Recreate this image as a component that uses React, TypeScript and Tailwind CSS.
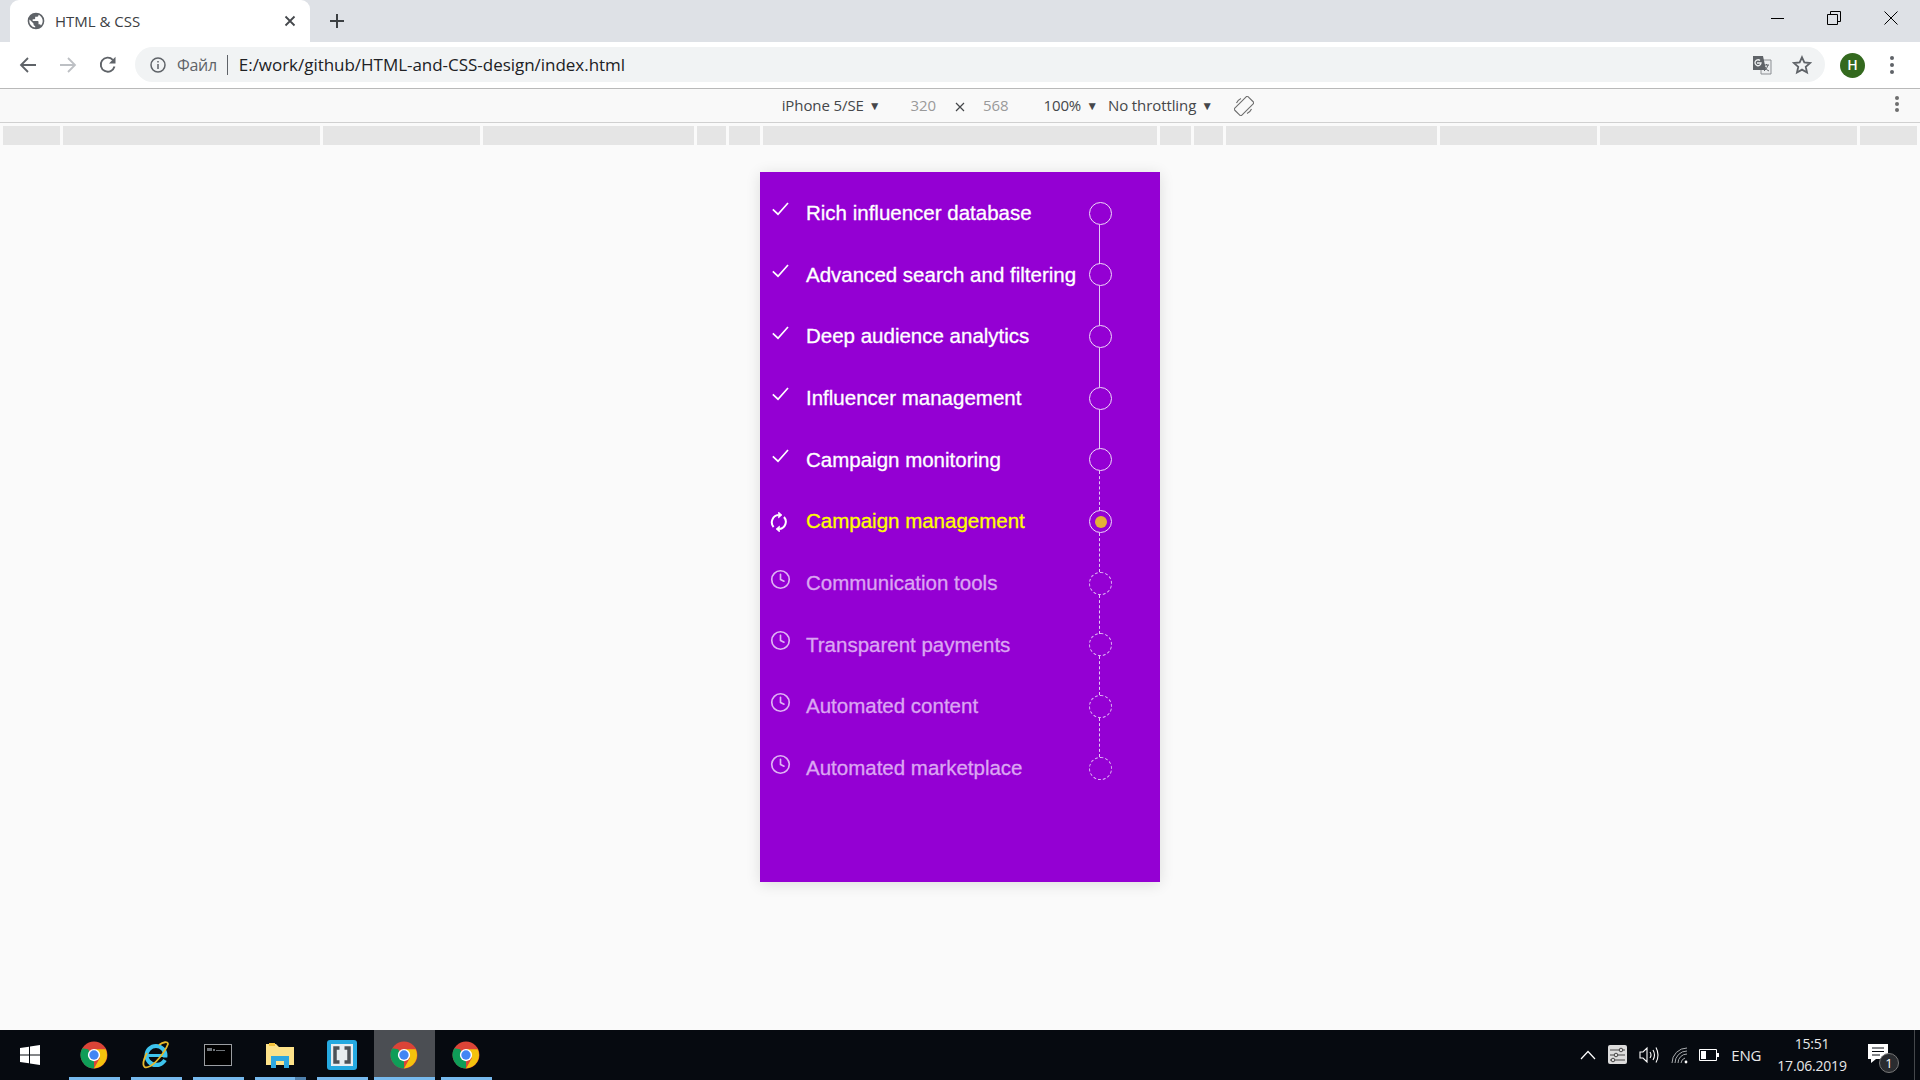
import type { FC } from "react";
import { LuClock } from "react-icons/lu";

const ui = "font-['Open_Sans','Noto_Sans',sans-serif]";

const rulerWidths = [57, 257, 157, 211, 29, 31, 394, 31, 29, 211, 157, 257, 57];

type Status = "done" | "active" | "pending";

const steps: { label: string; status: Status }[] = [
  { label: "Rich influencer database", status: "done" },
  { label: "Advanced search and filtering", status: "done" },
  { label: "Deep audience analytics", status: "done" },
  { label: "Influencer management", status: "done" },
  { label: "Campaign monitoring", status: "done" },
  { label: "Campaign management", status: "active" },
  { label: "Communication tools", status: "pending" },
  { label: "Transparent payments", status: "pending" },
  { label: "Automated content", status: "pending" },
  { label: "Automated marketplace", status: "pending" },
];

const ChromeIcon: FC = () => (
  <svg className="mr-[2px]" width="28" height="28" viewBox="0 0 48 48">
    <circle cx="24" cy="24" r="23" fill="#db4437" />
    <path d="M24 47 A23 23 0 0 1 4 12.5 L14 14 L24 34 Z" fill="#0f9d58" />
    <path d="M24 14 H44 A23 23 0 0 1 24 47 L34 29 Z" fill="#f4c20d" />
    <circle cx="24" cy="24" r="10.5" fill="#fff" />
    <circle cx="24" cy="24" r="8" fill="#4285f4" />
  </svg>
);

const TaskItem: FC<{ active?: boolean; double?: boolean; children: React.ReactNode }> = ({ active, double, children }) => (
  <div className={`relative flex h-full items-center justify-center ${active ? "w-[61px] bg-[#4b4e53]" : "w-[51px]"}`}>
    {children}
    <div className="absolute right-0 bottom-0 left-0 h-[3px] bg-[#76b9ed]" />
    {double && <div className="absolute right-0 bottom-0 h-[3px] w-[11px] bg-[#4f81ad]" />}
  </div>
);

const Step: FC<{ label: string; status: Status; last: boolean }> = ({ label, status, last }) => {
  const solidLine = status === "done" && label !== "Campaign monitoring";
  return (
    <li className="flex h-[61.65px] items-center">
      <div className="flex h-full w-[46px] shrink-0 items-center justify-start pl-[11px]">
        {status === "done" && (
          <svg className="mb-[8px] ml-[1px]" width="17" height="14" viewBox="0 0 17 14" fill="none" stroke="#fff" strokeWidth="1.7">
            <path d="M0.8 7.4 L6 12.2 L16 1" />
          </svg>
        )}
        {status === "active" && (
          <svg width="18" height="20" viewBox="0 0 18 20" fill="none" stroke="#fff" strokeWidth="2" className="ml-[-1px]">
            <path d="M3.6 15 A7.2 7.2 0 0 1 8.5 3.1" />
            <path d="M14 5 A7.2 7.2 0 0 1 9.5 16.9" />
            <path d="M8.5 0 L12 3 L8.5 6 Z" fill="#fff" strokeWidth="0.6" />
            <path d="M9.5 14 L6 17 L9.5 20 Z" fill="#fff" strokeWidth="0.6" />
          </svg>
        )}
        {status === "pending" && <LuClock className="mb-[8px] ml-[-1px] text-[21px] text-[#dfb3f4]" strokeWidth={1.9} />}
      </div>
      <span
        className={`flex-1 text-[20.5px] leading-none font-['Liberation_Sans',Arial,sans-serif] whitespace-nowrap [-webkit-text-stroke:0.3px_currentColor] ${
          status === "done" ? "text-white" : status === "active" ? "text-[#ffff00]" : "text-[#dba6f2]"
        }`}
      >
        {label}
      </span>
      <div className="relative mr-[48px] h-[23px] w-[23px] shrink-0">
        <div
          className={`flex h-full w-full items-center justify-center rounded-full border-[1.5px] ${
            status === "pending" ? "border-dashed border-[#dfb3f4]" : "border-[#f0d9fa]"
          }`}
        >
          {status === "active" && <div className="h-[12px] w-[12px] rounded-full bg-[#e3b136]" />}
        </div>
        {!last && (
          <div
            className={`absolute top-[23px] left-[10px] h-[39px] border-l-[1.5px] border-[#e6c4f6] ${
              solidLine ? "" : "border-dashed"
            }`}
          />
        )}
      </div>
    </li>
  );
};

export default function App() {
  return (
    <div className={`flex h-screen w-full flex-col overflow-hidden bg-[#fafafa] ${ui}`}>
      {/* tab strip */}
      <div className="flex h-[42px] shrink-0 items-end bg-[#dee1e6]">
        <div className="ml-[10px] flex h-[42px] w-[300px] items-center rounded-t-[9px] bg-white pr-[14px] pl-[16px]">
          <svg width="20" height="20" viewBox="0 0 24 24" fill="#5f6368" className="mr-[9px]">
            <path d="M12 2a10 10 0 1 0 0 20 10 10 0 0 0 0-20zm-1 17.9A8 8 0 0 1 4.2 10.2L9 15v1a2 2 0 0 0 2 2zm6.9-2.5A2 2 0 0 0 16 16h-1v-3a1 1 0 0 0-1-1H8v-2h2a1 1 0 0 0 1-1V7h2a2 2 0 0 0 2-2v-.4a8 8 0 0 1 2.9 12.8z" />
          </svg>
          <span className="flex-1 text-[15px] text-[#3c4043]">HTML &amp; CSS</span>
          <svg width="12" height="12" viewBox="0 0 12 12" stroke="#45484c" strokeWidth="1.8">
            <path d="M1.5 1.5 L10.5 10.5 M10.5 1.5 L1.5 10.5" />
          </svg>
        </div>
        <div className="ml-[19px] flex h-[42px] items-center">
          <svg width="16" height="16" viewBox="0 0 16 16" stroke="#3c4043" strokeWidth="2">
            <path d="M8 1 V15 M1 8 H15" />
          </svg>
        </div>
        <div className="ml-auto flex h-[42px] items-start">
          <div className="flex h-[36px] w-[56px] items-center justify-center">
            <div className="mr-[2px] h-px w-[13px] bg-black" />
          </div>
          <div className="flex h-[36px] w-[56px] items-center justify-center">
            <svg width="14" height="14" viewBox="0 0 14 14" fill="none" stroke="#000">
              <path d="M0.5 3.5 H10.5 V13.5 H0.5 Z M3.5 3.5 V0.5 H13.5 V10.5 H10.5" />
            </svg>
          </div>
          <div className="flex h-[36px] w-[58px] items-center justify-center">
            <svg width="14" height="14" viewBox="0 0 14 14" stroke="#000">
              <path d="M0.5 0.5 L13.5 13.5 M13.5 0.5 L0.5 13.5" />
            </svg>
          </div>
        </div>
      </div>

      {/* toolbar */}
      <div className="flex h-[47px] shrink-0 items-center border-b border-[#b9b9b9] bg-white">
        <div className="flex w-[135px] items-center pl-[19px]">
          <svg width="18" height="18" viewBox="0 0 18 18" fill="none" stroke="#5f6368" strokeWidth="1.8">
            <path d="M17 9 H2 M9 2 L2 9 L9 16" />
          </svg>
          <svg className="ml-[22px]" width="18" height="18" viewBox="0 0 18 18" fill="none" stroke="#bdc0c4" strokeWidth="1.8">
            <path d="M1 9 H16 M9 2 L16 9 L9 16" />
          </svg>
          <svg className="ml-[22px]" width="18" height="18" viewBox="0 0 18 18" fill="none">
            <path d="M15.5 10.5 A7 7 0 1 1 13.8 3.8" stroke="#5f6368" strokeWidth="1.9" />
            <path d="M16.5 0.8 V7.5 H10 Z" fill="#5f6368" />
          </svg>
        </div>
        <div className="mb-[1px] flex h-[35px] w-[1690px] items-center rounded-full bg-[#f1f3f4] pl-[15px]">
          <svg width="16" height="16" viewBox="0 0 16 16" fill="none" stroke="#5f6368" strokeWidth="1.5">
            <circle cx="8" cy="8" r="7" />
            <path d="M8 7 V12 M8 4 V5.6" />
          </svg>
          <span className="ml-[11px] text-[16px] tracking-[-0.3px] text-[#5f6368]">Файл</span>
          <div className="mr-[11px] ml-[10px] h-[20px] w-px bg-[#5f6368]" />
          <span className="flex-1 text-[17px] tracking-[-0.03px] text-[#202124]">E:/work/github/HTML-and-CSS-design/index.html</span>
          <svg className="mr-[20px]" width="20" height="20" viewBox="0 0 20 20">
            <path d="M9 5 H19 V19 H9 Z" fill="#eceef0" stroke="#8c8f93" />
            <path d="M1 1 H11 L14 15 H1 Z" fill="#5f6368" />
            <path d="M5 8 H9 A3 3 0 1 1 8 5.5" fill="none" stroke="#f1f3f4" strokeWidth="1.3" />
            <path d="M12 10 H17 M14.5 9 V10 M16 10 Q15 14 12 16 M13 12 Q14 15 17 16" fill="none" stroke="#5f6368" />
          </svg>
          <svg className="mr-[13px]" width="20" height="20" viewBox="0 0 24 24" fill="none" stroke="#5f6368" strokeWidth="2.2">
            <path d="M12 2.8 L14.8 9 L21.6 9.7 L16.5 14.2 L18 21 L12 17.5 L6 21 L7.5 14.2 L2.4 9.7 L9.2 9 Z" />
          </svg>
        </div>
        <div className="ml-[15px] flex h-[25px] w-[25px] items-center justify-center rounded-full bg-[#33691e] text-[14px] leading-none font-semibold text-white">
          H
        </div>
        <div className="ml-[25px] flex flex-col gap-[3px]">
          <div className="h-[4px] w-[4px] rounded-full bg-[#5f6368]" />
          <div className="h-[4px] w-[4px] rounded-full bg-[#5f6368]" />
          <div className="h-[4px] w-[4px] rounded-full bg-[#5f6368]" />
        </div>
      </div>

      {/* device toolbar */}
      <div className="relative grid h-[34px] shrink-0 grid-cols-[1fr_auto_1fr] items-center border-b border-[#d0d0d0] bg-[#f9f9f9] text-[15px] tracking-[-0.1px] text-[#45474a]">
        <div className="flex items-center justify-end">
          <span>iPhone 5/SE</span>
          <span className="ml-[5px] text-[12px]">▼</span>
          <span className="mr-[-1px] ml-[30px] text-[#9a9a9a]">320</span>
        </div>
        <svg className="mx-[20px] mt-[3px]" width="10" height="10" viewBox="0 0 10 10" stroke="#45474a" strokeWidth="1.2">
          <path d="M1 1 L9 9 M9 1 L1 9" />
        </svg>
        <div className="flex items-center">
          <span className="ml-[-2px] text-[#9a9a9a]">568</span>
          <span className="ml-[35px]">100%</span>
          <span className="ml-[5px] text-[12px]">▼</span>
          <span className="ml-[10px]">No throttling</span>
          <span className="ml-[5px] text-[12px]">▼</span>
          <svg className="ml-[21px]" width="20" height="20" viewBox="0 0 20 20" fill="none" stroke="#6e6e6e" strokeWidth="1.1">
            <rect x="5" y="0.5" width="10" height="19" rx="1.5" transform="rotate(45 10 10)" />
            <path d="M2.5 7 A8.5 8.5 0 0 1 7 2.5 M17.5 13 A8.5 8.5 0 0 1 13 17.5" />
          </svg>
        </div>
        <div className="absolute top-[7px] right-[21px] flex flex-col gap-[2px]">
          <div className="h-[4px] w-[4px] rounded-full bg-[#6e6e6e]" />
          <div className="h-[4px] w-[4px] rounded-full bg-[#6e6e6e]" />
          <div className="h-[4px] w-[4px] rounded-full bg-[#6e6e6e]" />
        </div>
      </div>

      {/* media query ruler */}
      <div className="mt-[3px] flex h-[19px] shrink-0 gap-[3px] pl-[3px]">
        {rulerWidths.map((w, i) => (
          <div key={i} className="h-full bg-[#e5e5e5]" style={{ width: w }} />
        ))}
      </div>

      {/* page */}
      <div className="flex flex-1 justify-center pt-[27px]">
        <div className="h-[710px] w-[400px] bg-[#9400d3] pt-[10.5px] shadow-[0_2px_14px_rgba(0,0,0,0.12)]">
          <ul>
            {steps.map((s, i) => (
              <Step key={s.label} label={s.label} status={s.status} last={i === steps.length - 1} />
            ))}
          </ul>
        </div>
      </div>

      {/* taskbar */}
      <div className="flex h-[50px] shrink-0 items-center bg-[#060a10] text-white">
        <div className="flex h-full w-[69px] items-center pl-[20px]">
          <svg width="20" height="20" viewBox="0 0 20 20" fill="#fff">
            <path d="M0 3 L9 1.7 V9.5 H0 Z M10 1.5 L20 0 V9.5 H10 Z M0 10.5 H9 V18.3 L0 17 Z M10 10.5 H20 V20 L10 18.5 Z" />
          </svg>
        </div>
        <div className="flex h-full gap-[11px]">
          <TaskItem>
            <ChromeIcon />
          </TaskItem>
          <TaskItem>
            <svg className="mr-[2px]" width="30" height="30" viewBox="0 0 30 30" fill="none">
              <circle cx="15" cy="15.5" r="9.5" stroke="#3ec4ee" strokeWidth="4" />
              <path d="M7 15.5 H24" stroke="#3ec4ee" strokeWidth="3" />
              <path d="M17 17.5 H28 L24 24 L10 26Z" fill="#060a10" />
              <path d="M24 20 A10 10 0 0 1 8 21.5" stroke="#3ec4ee" strokeWidth="4" />
              <path d="M6 13 C1 22 1 29 7 27 C14 25 24 12 27 4 C27 1 22 2 18 5" stroke="#e7b92c" strokeWidth="1.8" />
            </svg>
          </TaskItem>
          <TaskItem>
            <div className="mr-[2px] h-[22px] w-[28px] border border-[#9a9da1] bg-black pt-[3px] pl-[2px]">
              <div className="flex items-end gap-[1px]">
                <div className="h-[3px] w-[5px] bg-[#70757a]" />
                <div className="h-[2px] w-[2px] bg-[#70757a]" />
                <div className="h-px w-[9px] bg-[#70757a]" />
              </div>
            </div>
          </TaskItem>
          <TaskItem double>
            <svg className="mr-[2px]" width="28" height="26" viewBox="0 0 28 26">
              <path d="M0 2 H10 L13 5 H28 V23 H0 Z" fill="#fde289" />
              <path d="M3 1 H9 V4 H3 Z" fill="#f5c33b" />
              <path d="M5 26 V14 H23 V26 H18 V19 H10 V26 Z" fill="#2fa8e0" />
            </svg>
          </TaskItem>
          <TaskItem>
            <svg className="mr-[2px]" width="30" height="30" viewBox="0 0 30 30">
              <rect width="30" height="30" rx="3" fill="#25a9e0" />
              <rect x="4" y="4" width="22" height="22" fill="#e8edf0" />
              <path d="M12.5 8 H8 V22 H12.5 M17.5 8 H22 V22 H17.5" fill="none" stroke="#4d5257" strokeWidth="3.5" />
            </svg>
          </TaskItem>
        </div>
        <div className="ml-[6px] flex h-full gap-[6px]">
          <TaskItem active>
            <ChromeIcon />
          </TaskItem>
          <TaskItem>
            <ChromeIcon />
          </TaskItem>
        </div>

        <div className="ml-auto flex h-full items-center">
          <svg width="16" height="10" viewBox="0 0 16 10" fill="none" stroke="#fff" strokeWidth="1.2">
            <path d="M1 9 L8 1.5 L15 9" />
          </svg>
          <svg className="ml-[12px]" width="20" height="20" viewBox="0 0 20 20">
            <rect width="19" height="19" rx="2" fill="#dcdcdc" />
            <path d="M2 5 H17 M2 10 H17 M2 15 H17" stroke="#444" strokeWidth="1.2" />
            <circle cx="13" cy="5" r="1.8" fill="#dcdcdc" stroke="#444" />
            <circle cx="8" cy="10" r="1.8" fill="#dcdcdc" stroke="#444" />
            <circle cx="5" cy="15" r="1.8" fill="#dcdcdc" stroke="#444" />
          </svg>
          <svg className="ml-[11px]" width="20" height="20" viewBox="0 0 20 20" fill="none" stroke="#fff" strokeWidth="1.1">
            <path d="M1 7 H4 L8 3 V17 L4 13 H1 Z M11 7 Q13 10 11 13 M14 5 Q17 10 14 15 M17 2.5 Q21 10 17 17.5" />
          </svg>
          <svg className="ml-[12px]" width="17" height="17" viewBox="0 0 17 17" fill="none" stroke="#a9acaf" strokeWidth="1">
            <path d="M1 16 A15 15 0 0 1 16 1 M4 16 A12 12 0 0 1 16 4 M7 16 A9 9 0 0 1 16 7 M10 16 A6 6 0 0 1 14 11" />
            <circle cx="15" cy="15" r="1.4" fill="#fff" stroke="none" />
          </svg>
          <svg className="ml-[11px]" width="20" height="12" viewBox="0 0 20 12" fill="none" stroke="#fff">
            <path d="M0.5 0.5 H17.5 V11.5 H0.5 Z" />
            <rect x="2" y="2" width="5" height="8" fill="#fff" stroke="none" />
            <rect x="18" y="4" width="2" height="4" fill="#fff" stroke="none" />
          </svg>
          <span className="ml-[12px] text-[15px] tracking-[-0.3px] text-[#e8e8e8]">ENG</span>
          <div className="ml-[16px] flex w-[70px] flex-col items-center text-[14px] leading-[22px] tracking-[-0.2px] text-[#e8e8e8]">
            <span>15:51</span>
            <span>17.06.2019</span>
          </div>
          <div className="relative mr-[20px] ml-[21px] h-[30px] w-[26px]">
            <svg width="22" height="20" viewBox="0 0 22 20" className="mt-[4px]">
              <path d="M0 0 H20 V15 H8 L3 19 V15 H0 Z" fill="#fff" />
              <path d="M4 4 H16 M4 7.5 H16 M4 11 H12" stroke="#060a10" />
            </svg>
            <div className="absolute right-[-5px] bottom-[-3px] flex h-[20px] w-[20px] items-center justify-center rounded-full border border-[#777] bg-[#2a2c30] text-[13px] leading-none">
              1
            </div>
          </div>
          <div className="h-full w-px bg-[#44474b]" />
          <div className="w-[5px]" />
        </div>
      </div>
    </div>
  );
}
